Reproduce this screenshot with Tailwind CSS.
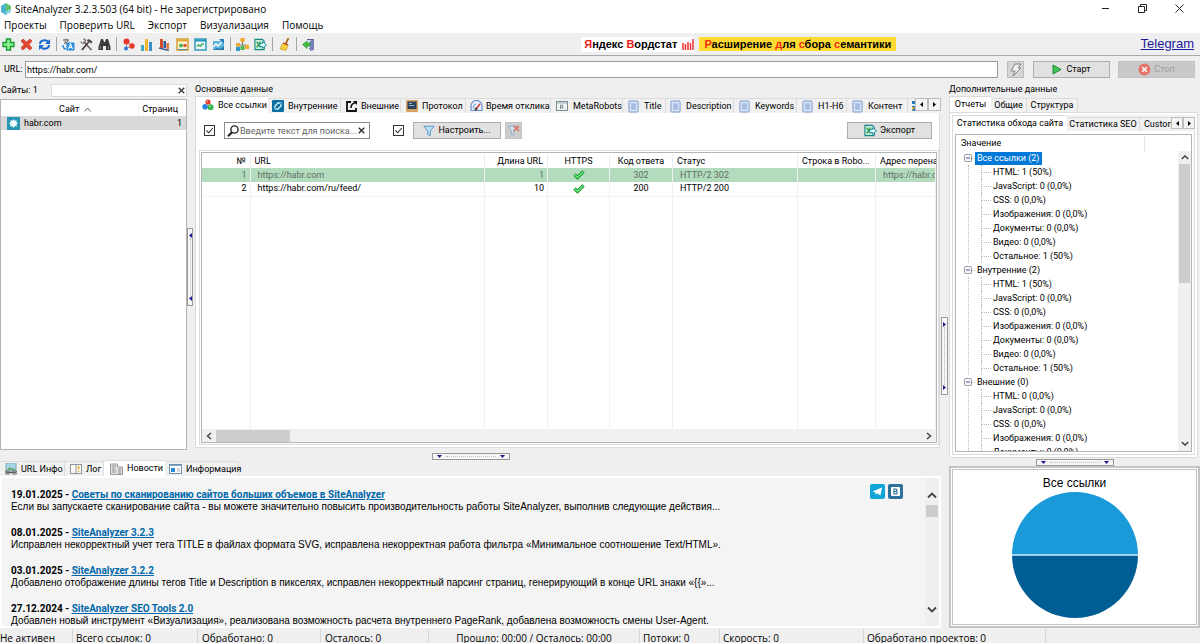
<!DOCTYPE html>
<html lang="ru">
<head>
<meta charset="utf-8">
<title>SiteAnalyzer 3.2.3.503 (64 bit) - Не зарегистрировано</title>
<script src="https://cdn.jsdelivr.net/npm/@tailwindcss/browser@4"></script>
</head>
<body class="flex h-screen flex-col overflow-hidden bg-[#efefef] font-['Roboto',sans-serif] text-[9px] leading-[13px] text-black [&_svg]:shrink-0">

<svg class="hidden" aria-hidden="true">
  <symbol id="doc" viewBox="0 0 12 14"><rect x="1" y="1" width="10" height="12" rx="1" fill="#dfe9f8" stroke="#6f8fc4"/><rect x="3" y="3" width="6" height="8" fill="#b4c8ea"/><path d="M4 5h4M4 7h4M4 9h4" stroke="#8eabd9" stroke-width=".7"/></symbol>
  <symbol id="export" viewBox="0 0 14 14"><path d="M1 1.500h8l2 2v9H1z" fill="#c9f0e4" stroke="#16877f" stroke-width="1.200"/><path d="M3 4l4 6M7 4l-4 6" stroke="#3c9a3c" stroke-width="1.500"/><path d="M6 6h3V4l4.500 3.500L9 11V9H6z" fill="#e9fbff" stroke="#138c9d"/></symbol>
  <symbol id="check" viewBox="0 0 12 10"><path d="M1.500 4.500 4.500 7.500 10.500 1.500" fill="none" stroke="#138a2b" stroke-width="3.200"/><path d="M1.700 4.700 4.500 7.400 10.200 1.800" fill="none" stroke="#5fe873" stroke-width="1.700"/></symbol>
  <symbol id="tick" viewBox="0 0 11 11"><path d="M2.500 5.500l2.200 2.300L8.800 3" fill="none" stroke="#333" stroke-width="1.100"/></symbol>
  <symbol id="funnel" viewBox="0 0 14 14"><path d="M1 1.500h12L8.500 7v5.500l-3-1.500V7z" fill="#bfe3fa" stroke="#4b8dbd"/></symbol>
  <symbol id="up" viewBox="0 0 10 6"><path d="M1 5l4-4 4 4" fill="none" stroke="#444" stroke-width="1.800"/></symbol>
  <symbol id="down" viewBox="0 0 10 6"><path d="M1 1l4 4 4-4" fill="none" stroke="#444" stroke-width="1.800"/></symbol>
  <symbol id="minus" viewBox="0 0 8 8"><rect x=".5" y=".5" width="7" height="7" rx="1" fill="#f8f8f8" stroke="#999"/><path d="M2 4h4" stroke="#3c5a9a"/></symbol>
  <symbol id="balls" viewBox="0 0 14 14"><circle cx="7" cy="3.500" r="3" fill="#e33527"/><circle cx="3.600" cy="9" r="3.300" fill="#2786d8"/><circle cx="10" cy="9.500" r="3.400" fill="#35b447"/><circle cx="6.200" cy="2.700" r="1" fill="#ff9e90"/><circle cx="9.200" cy="8.500" r="1" fill="#a5efac"/></symbol>
  <symbol id="chartwin" viewBox="0 0 13 13"><rect x="1" y="1" width="11" height="11" fill="#e9f7fb" stroke="#2796ba" stroke-width="1.400"/><path d="M1 2.500h11" stroke="#2796ba" stroke-width="2"/><path d="M3 8.500c2-4 3 2 4-1s2-1 3-1" fill="none" stroke="#3caa55" stroke-width="1.400"/></symbol>
</svg>

<header class="shrink-0 bg-white">
  <div class="flex h-[17px] items-center">
    <svg class="h-3 w-3" viewBox="0 0 12 12"><path d="M6 0 1 3v6l5 3z" fill="#48b4cf"/><path d="M6 0l5 3v3L6 9z" fill="#62c46b"/><path d="M6 12l5-3V6L6 9z" fill="#8bd2e6"/></svg>
    <h1 class="ml-[3px] flex-1 font-['Open_Sans','Noto_Sans',sans-serif] text-[10px] leading-[16px]">SiteAnalyzer 3.2.3.503 (64 bit) - Не зарегистрировано</h1>
    <div class="flex items-center gap-[28px] pr-[16px]">
      <button type="button" aria-label="Свернуть" class="flex h-3 w-[9px] items-center"><svg class="w-full" viewBox="0 0 9 9"><path d="M1 4.500h7" stroke="#222"/></svg></button>
      <button type="button" aria-label="Развернуть" class="flex h-3 w-[9px] items-center"><svg class="w-full" viewBox="0 0 9 9"><path d="M.5 2.500h6v6h-6zM2.500 2V.5h6v6H7" fill="none" stroke="#222"/></svg></button>
      <button type="button" aria-label="Закрыть" class="flex h-3 w-[9px] items-center"><svg class="w-full" viewBox="0 0 9 9"><path d="M.5.5l8 8M8.500.5l-8 8" stroke="#222"/></svg></button>
    </div>
  </div>
  <nav class="flex h-[16px] items-center gap-[13px] pl-1 font-['Open_Sans','Noto_Sans',sans-serif] text-[10px] leading-[16px]">
    <button type="button">Проекты</button><button type="button">Проверить URL</button><button type="button">Экспорт</button><button type="button">Визуализация</button><button type="button">Помощь</button>
  </nav>
</header>

<div class="flex h-[23px] shrink-0 items-center border-b border-[#a9a9a9] pl-[2px] pr-[6px]">
  <div class="flex items-center gap-[5px]">
    <button type="button" aria-label="Добавить"><svg class="h-[13px] w-[13px]" viewBox="0 0 13 13"><path d="M4.500 1h4v3.500H12v4H8.500V12h-4V8.500H1v-4h3.500z" fill="#8df28f" stroke="#179c35" stroke-width="1.400"/></svg></button>
    <button type="button" aria-label="Удалить"><svg class="h-[13px] w-[13px]" viewBox="0 0 13 13"><path d="M1 3l2-2 3.500 3L10 1l2 2-3 3.500L12 10l-2 2-3.500-3L3 12l-2-2 3-3.500z" fill="#e5472f" stroke="#bb2d1b" stroke-width=".6"/></svg></button>
    <button type="button" aria-label="Обновить"><svg class="h-[13px] w-[13px]" viewBox="0 0 13 13"><path d="M2 6c0-4 6-5 8-2M11 7c0 4-6 5-8 2" fill="none" stroke="#1769cf" stroke-width="2"/><path d="M12 1v5H7zM1 12V7h5z" fill="#1769cf"/></svg></button>
    <span class="h-[14px] w-px bg-[#a5a5a5]"></span>
    <button type="button" aria-label="Язык"><svg class="h-[13px] w-[13px]" viewBox="0 0 13 13"><path d="M1 2h6M4 .5V2M2 5.500C5 5 6 3 6 2M2.500 3.500l3 2" fill="none" stroke="#555"/><rect x="4.500" y="4.500" width="8" height="8" rx="1" fill="#2b8de0"/><path d="M6.500 11l2-5 2 5M7 9.500h3" fill="none" stroke="#fff" stroke-width="1.100"/><path d="M1 7c0 3 1 4 3 4" fill="none" stroke="#2b8de0" stroke-width="1.500"/></svg></button>
    <button type="button" aria-label="Настройки"><svg class="h-[13px] w-[13px]" viewBox="0 0 13 13"><path d="M3.500 3.500l8 8.500" stroke="#6a6a6a" stroke-width="1.800"/><path d="M1 3.500a2.200 2.200 0 1 0 2.500-2.500" fill="none" stroke="#777" stroke-width="1.400"/><path d="M9 3.500L2 12" stroke="#4d3b36" stroke-width="1.800"/><path d="M6.500 2.500C9 0 11 2 12.500 4.500L11 5.500 9 3.500z" fill="#444"/></svg></button>
    <button type="button" aria-label="Поиск"><svg class="h-[13px] w-[13px]" viewBox="0 0 13 13"><path d="M3 1h2l1 3h1l1-3h2l2.500 8v3H8V8H5v4H.5V9z" fill="#3a3a3a"/><path d="M2.500 8v3M10.500 8v3" stroke="#8a8a8a"/></svg></button>
    <span class="h-[14px] w-px bg-[#a5a5a5]"></span>
    <button type="button" aria-label="Граф"><svg class="h-[13px] w-[13px]" viewBox="0 0 13 13"><path d="M4.500 4v6L10 8z" fill="none" stroke="#888"/><circle cx="4.500" cy="3.500" r="3" fill="#e8392b"/><circle cx="4" cy="10.500" r="2" fill="#2b7ddd"/><circle cx="10" cy="8" r="2.700" fill="#e8392b"/></svg></button>
    <button type="button" aria-label="Диаграмма"><svg class="h-[13px] w-[13px]" viewBox="0 0 13 13"><path d="M1 7h3v6H1z" fill="#3fa7c4"/><path d="M5 1h3v12H5z" fill="#f1b62e"/><path d="M9 4h3v9H9z" fill="#3f8ec4"/></svg></button>
    <button type="button" aria-label="Отчет"><svg class="h-[13px] w-[13px]" viewBox="0 0 13 13"><path d="M2 1h3v9H2z" fill="#d6502e"/><path d="M5.500 3h2.500v7H5.500z" fill="#2d5c9b"/><path d="M8.500 5H11v6H8.500z" fill="#e27b33"/><path d="M1 10l10 2.500" stroke="#3b5f97" stroke-width="1.500"/></svg></button>
    <button type="button" aria-label="Индексация"><svg class="h-[13px] w-[13px]" viewBox="0 0 13 13"><rect x="1" y="1" width="11" height="11" fill="#fff6d9" stroke="#d39a28" stroke-width="1.400"/><path d="M1 2.500h11" stroke="#e1a732" stroke-width="2"/><circle cx="5" cy="7.500" r="2" fill="#4bb257"/><circle cx="9" cy="7.500" r="1.800" fill="#e3512d"/><path d="M2 11.500h9" stroke="#3c92b8"/></svg></button>
    <button type="button" aria-label="Мониторинг"><svg class="h-[13px] w-[13px]"><use href="#chartwin"/></svg></button>
    <button type="button" aria-label="Рост"><svg class="h-[13px] w-[13px]" viewBox="0 0 13 13"><path d="M1 3h11v9H1z" fill="#60b7dd"/><path d="M1 9l3-3 2 2 4-4" fill="none" stroke="#fff" stroke-width="1.400"/><path d="M7 1h5v5z" fill="#2a7fc0"/><path d="M1 12l4-2 3 1 4-3v4z" fill="#2777aa"/></svg></button>
    <span class="h-[14px] w-px bg-[#a5a5a5]"></span>
    <button type="button" aria-label="Структура"><svg class="h-[13px] w-[13px]" viewBox="0 0 13 13"><path d="M6.500 4v3M2.500 9V7h8v2" fill="none" stroke="#777"/><rect x="4.500" y="0" width="4" height="4" fill="#f0a92b"/><rect x="0" y="5" width="4" height="3.500" fill="#e6a937"/><rect x="0" y="9" width="4" height="4" fill="#2e93d0"/><rect x="4.500" y="8" width="4" height="4" fill="#4cb54c"/><rect x="9" y="7" width="4" height="4" fill="#f0a92b"/></svg></button>
    <button type="button" aria-label="Экспорт в Excel"><svg class="h-[13px] w-[13px]"><use href="#export"/></svg></button>
    <span class="h-[14px] w-px bg-[#a5a5a5]"></span>
    <button type="button" aria-label="Очистить"><svg class="h-[13px] w-[13px]" viewBox="0 0 13 13"><path d="M10.500 0L7.500 6" stroke="#a36b25" stroke-width="1.800"/><path d="M5 5l5 2-2 5.500L2 11z" fill="#f6cf3d" stroke="#d39d18" stroke-width=".7"/><path d="M5 5l5 2" stroke="#b03a2b" stroke-width="1.300"/></svg></button>
    <span class="h-[14px] w-px bg-[#a5a5a5]"></span>
    <button type="button" aria-label="Выход"><svg class="h-[13px] w-[13px]" viewBox="0 0 13 13"><path d="M5 1.500h6v9H7" fill="#d5dbf0" stroke="#555b90" stroke-width="1.200"/><path d="M8 3l4-2v11l-4 1z" fill="#7480b6"/><path d="M8 5v3H5v2.500L.5 6.500 5 3v2z" fill="#42c043" stroke="#1e8a2c" stroke-width=".6"/></svg></button>
  </div>
  <div class="ml-auto mr-auto flex items-center gap-[5px] pl-[22px] font-['Liberation_Sans',sans-serif] text-[11px] font-bold leading-[14px]">
    <a href="#wordstat" class="flex h-[15px] items-center gap-[5px] bg-white pl-[3px]"><span><span class="text-[#ee2020]">Я</span>ндекс <span class="text-[#ee2020]">В</span>ордстат</span>
      <svg class="h-[11px] w-[12px]" viewBox="0 0 12 11"><path d="M1 11V4M3.500 11V5M6 11V3M8.500 11V4M11 11V0" stroke="#e33" stroke-width="1.500"/></svg></a>
    <a href="#semantics" class="flex h-[14px] items-center bg-[#ffda33] px-[5px]"><span><span class="text-[#f02a10]">Р</span>асширение <span class="text-[#f02a10]">д</span>ля <span class="text-[#f02a10]">с</span>бора <span class="text-[#f02a10]">с</span>емантики</span></a>
  </div>
  <a href="#telegram" class="font-['Liberation_Sans',sans-serif] text-[13px] leading-[16px] text-[#1b1b9c] underline">Telegram</a>
</div>

<form class="flex h-[27px] shrink-0 items-center pl-1 pr-[5px]">
  <label for="url" class="w-[21px]">URL:</label>
  <input id="url" type="text" value="https://habr.com/" class="h-[17px] min-w-0 flex-1 border border-[#9a9a9a] bg-white px-px outline-none">
  <button type="button" aria-label="Быстрый запуск" class="ml-[9px] flex h-[17px] w-[17px] items-center justify-center border border-[#bcbcbc] bg-[#d6d6d6]"><svg class="h-[14px] w-[12px]" viewBox="0 0 12 14"><path d="M5 1h6L8 5h3l-8 8 2-5H1z" fill="#efefef" stroke="#858585"/></svg></button>
  <button type="button" class="ml-[9px] flex h-[17px] w-[77px] items-center justify-center gap-1 border border-[#adadad] bg-[#e1e1e1]"><svg class="h-[11px] w-[10px]" viewBox="0 0 10 11"><path d="M1 1l8 4.500L1 10z" fill="#43c455" stroke="#168a30"/></svg>Старт</button>
  <button type="button" disabled class="ml-2 flex h-[17px] w-[77px] items-center justify-center gap-[3px] border border-[#c4c4c4] bg-[#c9c9c9] text-[#a2a2a2]"><svg class="h-[13px] w-[13px]" viewBox="0 0 13 13"><circle cx="6.500" cy="6.500" r="6" fill="#e5746a"/><path d="M4.200 4.200l4.600 4.600M8.800 4.200L4.200 8.800" stroke="#fff" stroke-width="1.600"/></svg>Стоп</button>
</form>

<main class="flex min-h-0 flex-1">
  <div class="flex min-w-0 flex-1 flex-col">
    <div class="flex min-h-0 flex-1">

      <section class="flex w-[187px] shrink-0 flex-col">
        <div class="flex h-[15px] items-center pl-px">
          <label for="site-filter" class="w-[50px] shrink-0 whitespace-nowrap">Сайты: 1</label>
          <div class="flex h-[13px] min-w-0 flex-1 items-center border border-[#dcdcdc] bg-white pr-px">
            <input id="site-filter" type="text" class="h-full min-w-0 flex-1 outline-none">
            <button type="button" aria-label="Очистить фильтр"><svg class="h-[7px] w-[7px]" viewBox="0 0 7 7"><path d="M.7.7l5.600 5.600M6.300.7L.7 6.300" stroke="#333" stroke-width="1.300"/></svg></button>
          </div>
        </div>
        <div class="mt-px flex-1 border border-[#b5b5b5] bg-white pt-[2px]">
          <table class="w-full table-fixed">
            <thead><tr class="h-[14px]">
              <th class="border-r border-[#f0f0f0] p-0 font-normal"><span class="inline-flex items-center gap-[5px] pl-3">Сайт <svg class="h-[5px] w-[7px]" viewBox="0 0 7 5"><path d="M.5 4.500l3-3.500 3 3.500" fill="none" stroke="#666"/></svg></span></th>
              <th class="w-[48px] p-0 pr-2 text-right font-normal">Страниц</th></tr></thead>
            <tbody><tr class="h-[14px] bg-[#d9d9d9]">
              <td class="p-0"><span class="flex items-center gap-[4px] pl-[6px]"><svg class="h-[13px] w-[13px]" viewBox="0 0 13 13"><rect width="13" height="13" fill="#2796b4"/><path d="M6.500 2l1 1.700 2-.7-.2 2L11 6l-1.500 1L10 9.500 8 9l-1.500 2L5 9l-2 .5.500-2L2 6l1.700-1L3.500 3l2 .7z" fill="#eefcff"/></svg>habr.com</span></td>
              <td class="p-0 pr-1 text-right">1</td></tr></tbody>
          </table>
        </div>
      </section>

      <div class="flex w-[8px] shrink-0 items-center"><div class="flex h-[78px] w-[6px] flex-col items-center justify-between border border-[#999] bg-[#f6f6f6] py-1"><svg class="h-[5px] w-[3px]" viewBox="0 0 3 5"><path d="M3 0v5L0 2.500z" fill="#1c1c8e"/></svg><span class="w-px flex-1 border-l border-dotted border-[#bbb]"></span><svg class="h-[5px] w-[3px]" viewBox="0 0 3 5"><path d="M3 0v5L0 2.500z" fill="#1c1c8e"/></svg></div></div>

      <section class="flex min-w-0 flex-1 flex-col pb-[2px]">
        <h2 class="h-[13px] shrink-0">Основные данные</h2>
        <div role="tablist" class="flex h-[17px] shrink-0 items-end overflow-hidden whitespace-nowrap">
          <button type="button" role="tab" aria-selected="true" class="flex h-[17px] w-[73px] shrink-0 items-center gap-1 border-l border-t border-[#dcdcdc] bg-white pl-[6px]"><svg class="h-[12px] w-[12px]"><use href="#balls"/></svg>Все ссылки</button>
          <div class="flex h-[15px] min-w-0 flex-1 items-center overflow-hidden border-t border-[#dcdcdc] bg-[#f1f1f1]">
            <button type="button" role="tab" class="flex h-full w-[73px] shrink-0 items-center gap-1 border-r border-[#dcdcdc] pl-1"><svg class="h-[12px] w-[12px]" viewBox="0 0 12 12"><rect width="12" height="12" rx="1" fill="#0d6d9f"/><path d="M3 9V6l3-3h3v3L6 9z" fill="none" stroke="#c3f1ff" stroke-width="1.400"/><path d="M2.500 9.500l7-7" stroke="#0d6d9f"/></svg>Внутренние</button>
            <button type="button" role="tab" class="flex h-full w-[60px] shrink-0 items-center gap-1 border-r border-[#dcdcdc] pl-[5px]"><svg class="h-[11px] w-[11px]" viewBox="0 0 11 11"><path d="M5 1H1v9h9V7" fill="none" stroke="#111" stroke-width="1.800"/><path d="M7 0h4v4z" fill="#111"/><path d="M10 1.500C6 2 5 4 5 7" fill="none" stroke="#111" stroke-width="1.600"/></svg>Внешние</button>
            <button type="button" role="tab" class="flex h-full w-[65px] shrink-0 items-center gap-1 border-r border-[#dcdcdc] pl-[5px]"><svg class="h-[12px] w-[12px]" viewBox="0 0 12 12"><rect width="12" height="12" rx="1" fill="#d9a463"/><rect x="1.500" y="1.500" width="9" height="7.500" fill="#2b4157"/><path d="M3 3.500h3M3 5.500h5" stroke="#8fb4d6"/></svg>Протокол</button>
            <button type="button" role="tab" class="flex h-full w-[85px] shrink-0 items-center gap-[3px] border-r border-[#dcdcdc] pl-[4px]"><svg class="h-[12px] w-[13px]" viewBox="0 0 13 12"><path d="M1 10.500V6a5.500 5.500 0 0 1 11 0v4.500z" fill="#e7eefb" stroke="#6a8dcb" stroke-width="1.200"/><path d="M6 9l4-5" stroke="#d93b32" stroke-width="1.500"/><path d="M3 8l1-3 2-1" fill="none" stroke="#5b9dcf"/><circle cx="6" cy="9" r="1.500" fill="#444"/></svg>Время отклика</button>
            <button type="button" role="tab" class="flex h-full w-[72px] shrink-0 items-center gap-[5px] border-r border-[#dcdcdc] pl-[5px]"><svg class="h-[10px] w-[12px]" viewBox="0 0 12 10"><rect x=".5" y=".5" width="11" height="9" fill="#edf5f5" stroke="#7c8b8f"/><path d="M1 2h10" stroke="#9fb0b4"/><path d="M4.500 8V4h2q1.200 1-.2 2h-1.800M6 6l1.500 2" fill="none" stroke="#71878e" stroke-width=".9"/></svg>MetaRobots</button>
            <button type="button" role="tab" class="flex h-full w-[43px] shrink-0 items-center gap-[5px] border-r border-[#dcdcdc] pl-[5px]"><svg class="h-[13px] w-[11px]"><use href="#doc"/></svg>Title</button>
            <button type="button" role="tab" class="flex h-full w-[68px] shrink-0 items-center gap-[5px] border-r border-[#dcdcdc] pl-1"><svg class="h-[13px] w-[11px]"><use href="#doc"/></svg>Description</button>
            <button type="button" role="tab" class="flex h-full w-[63px] shrink-0 items-center gap-[5px] border-r border-[#dcdcdc] pl-[5px]"><svg class="h-[13px] w-[11px]"><use href="#doc"/></svg>Keywords</button>
            <button type="button" role="tab" class="flex h-full w-[50px] shrink-0 items-center gap-[5px] border-r border-[#dcdcdc] pl-[5px]"><svg class="h-[13px] w-[11px]"><use href="#doc"/></svg>H1-H6</button>
            <button type="button" role="tab" class="flex h-full w-[61px] shrink-0 items-center gap-[5px] border-r border-[#dcdcdc] pl-[5px]"><svg class="h-[13px] w-[11px]"><use href="#doc"/></svg>Контент</button>
            <button type="button" role="tab" aria-label="Изображения" class="flex h-full w-[16px] shrink-0 items-center pl-[4px]"><svg class="h-[10px] w-[10px]" viewBox="0 0 10 10"><rect width="10" height="10" fill="#2778bb"/><path d="M0 10V6h3z" fill="#e8b03d"/><rect y="3" width="4" height="2" fill="#d9efff"/></svg></button>
          </div>
          <div class="mb-[2px] flex h-[13px] shrink-0">
            <button type="button" aria-label="Назад" class="flex w-[13px] items-center justify-center border border-[#bdbdbd] bg-[#f4f4f4]"><svg class="h-[5px] w-[3px]" viewBox="0 0 3 5"><path d="M3 0v5L0 2.500z"/></svg></button>
            <button type="button" aria-label="Вперед" class="flex w-[13px] items-center justify-center border border-[#bdbdbd] bg-[#f4f4f4]"><svg class="h-[5px] w-[3px]" viewBox="0 0 3 5"><path d="M0 0v5l3-2.500z"/></svg></button>
          </div>
        </div>

        <div class="mr-px flex min-h-0 flex-1 flex-col border border-t-0 border-[#dcdcdc] bg-white">
          <div class="flex h-[37px] shrink-0 items-center pb-[2px] pl-[8px] pr-[7px]">
            <span class="grid shrink-0"><input type="checkbox" checked aria-label="Поиск включен" class="col-start-1 row-start-1 h-[11px] w-[11px] appearance-none border border-[#333] bg-white"><svg class="pointer-events-none col-start-1 row-start-1 h-[11px] w-[11px]"><use href="#tick"/></svg></span>
            <div class="ml-[9px] flex h-[17px] w-[146px] shrink-0 items-center border border-[#8c8c8c] px-[2px]">
              <svg class="h-[12px] w-[12px]" viewBox="0 0 12 12"><circle cx="7.500" cy="4.500" r="3.600" fill="none" stroke="#222" stroke-width="1.400"/><path d="M5 7.200L1 11.200" stroke="#222" stroke-width="2.200"/></svg>
              <input type="text" aria-label="Поиск" placeholder="Введите текст для поиска..." class="h-full min-w-0 flex-1 pl-px outline-none placeholder:text-[#666]">
              <button type="button" aria-label="Очистить поиск" class="pr-[2px]"><svg class="h-[7px] w-[7px]" viewBox="0 0 7 7"><path d="M.7.7l5.600 5.600M6.300.7L.7 6.300" stroke="#333" stroke-width="1.400"/></svg></button>
            </div>
            <span class="ml-[23px] grid shrink-0"><input type="checkbox" checked aria-label="Фильтр включен" class="col-start-1 row-start-1 h-[11px] w-[11px] appearance-none border border-[#333] bg-white"><svg class="pointer-events-none col-start-1 row-start-1 h-[11px] w-[11px]"><use href="#tick"/></svg></span>
            <button type="button" class="ml-[9px] flex h-[17px] w-[88px] items-center justify-center gap-[3px] border border-[#adadad] bg-[#e1e1e1]"><svg class="h-[12px] w-[12px]"><use href="#funnel"/></svg>Настроить...</button>
            <button type="button" aria-label="Сбросить фильтр" class="ml-1 flex h-[17px] w-[17px] items-center justify-center border border-[#c4c4c4] bg-[#cdcdcd]"><svg class="h-[12px] w-[13px]" viewBox="0 0 15 14"><path d="M1 1.500h10L7.500 7v5.500l-2.500-1.500V7z" fill="#cfe0ea" stroke="#8fadc0"/><path d="M8 1l6 6M14 1L8 7" stroke="#d5776d" stroke-width="2"/></svg></button>
            <button type="button" class="ml-auto flex h-[17px] w-[85px] items-center justify-center gap-[3px] border border-[#adadad] bg-[#e1e1e1]"><svg class="h-[13px] w-[13px]"><use href="#export"/></svg>Экспорт</button>
          </div>

          <div class="mb-[2px] ml-[3px] flex min-h-0 flex-1 flex-col border border-[#dcdcdc] p-px">
          <div class="flex min-h-0 flex-1 flex-col border border-[#b5b5b5] bg-white">
            <div class="flex min-h-0 flex-1 flex-col overflow-hidden pt-px">
              <table class="h-full w-full table-fixed whitespace-nowrap">
                <colgroup><col class="w-[48px]"><col><col class="w-[63px]"><col class="w-[62px]"><col class="w-[63px]"><col class="w-[125px]"><col class="w-[78px]"><col class="w-[60px]"></colgroup>
                <thead><tr class="h-[14px] text-left [&>th]:overflow-hidden [&>th]:border-r [&>th]:border-[#ececec] [&>th]:p-0 [&>th]:px-1 [&>th]:font-normal [&>th]:last:border-r-0">
                  <th class="text-right">№</th><th>URL</th><th class="text-right">Длина URL</th><th class="text-center">HTTPS</th><th class="text-center">Код ответа</th><th>Статус</th><th>Строка в Robo...</th><th>Адрес перенаправления</th></tr></thead>
                <tbody class="[&_td]:overflow-hidden [&_td]:border-r [&_td]:border-[#f1f1f1] [&_td]:p-0 [&_td]:px-[3px]">
                  <tr class="h-[14px] bg-[#b3dcbf] text-[#5f6e63]"><td class="text-right">1</td><td><a href="#habr" class="pl-1">https://habr.com</a></td><td class="text-right">1</td><td><svg class="mx-auto h-[10px] w-[12px]" role="img" aria-label="Да"><use href="#check"/></svg></td><td class="text-center">302</td><td><span class="pl-1">HTTP/2 302</span></td><td></td><td><span class="pl-1">https://habr.com/ru/feed/</span></td></tr>
                  <tr class="h-[14px]"><td class="text-right">2</td><td><a href="#feed" class="pl-1">https://habr.com/ru/feed/</a></td><td class="text-right">10</td><td><svg class="mx-auto h-[10px] w-[12px]" role="img" aria-label="Да"><use href="#check"/></svg></td><td class="text-center">200</td><td><span class="pl-1">HTTP/2 200</span></td><td></td><td></td></tr>
                  <tr class="border-t border-[#f4f4f4]" aria-hidden="true"><td></td><td></td><td></td><td></td><td></td><td></td><td></td><td></td></tr>
                </tbody>
              </table>
            </div>
            <div class="flex h-[13px] shrink-0 items-center bg-[#f0f0f0] px-1">
              <svg class="h-[8px] w-[6px]" viewBox="0 0 6 8"><path d="M5 1L1.500 4 5 7" fill="none" stroke="#444" stroke-width="1.500"/></svg>
              <span class="ml-1 h-[12px] w-[74px] bg-[#cdcdcd]"></span>
              <svg class="ml-auto h-[8px] w-[6px]" viewBox="0 0 6 8"><path d="M1 1l3.500 3L1 7" fill="none" stroke="#444" stroke-width="1.500"/></svg>
            </div>
          </div>
          </div>
        </div>
      </section>
    </div>

    <div class="flex h-[10px] shrink-0 items-end justify-center"><div class="flex h-[7px] w-[78px] items-center justify-between border border-[#999] bg-[#f6f6f6] px-1"><svg class="h-[3px] w-[5px]" viewBox="0 0 5 3"><path d="M0 0h5L2.500 3z" fill="#1c1c8e"/></svg><span class="mx-1 flex-1 border-t border-dotted border-[#bbb]"></span><svg class="h-[3px] w-[5px]" viewBox="0 0 5 3"><path d="M0 0h5L2.500 3z" fill="#1c1c8e"/></svg></div></div>

    <section class="flex h-[168px] shrink-0 flex-col">
      <div role="tablist" class="flex h-[16px] shrink-0 items-end whitespace-nowrap">
        <button type="button" role="tab" class="flex h-[15px] w-[65px] items-center gap-1 border-r border-t border-[#dcdcdc] bg-[#f1f1f1] pl-[5px]"><svg class="h-[12px] w-[12px]" viewBox="0 0 12 12"><rect x="1" y="0" width="10" height="8" fill="#a7d5ea" stroke="#8aa"/><path d="M2 7l3-3 2 2 1-1 3 2z" fill="#62a568"/><path d="M1 9.500h3M8 9.500h3M4 9.500h4" stroke="#666" stroke-width="1.200"/><rect x="0" y="8" width="5" height="3" rx="1.500" fill="none" stroke="#555"/><rect x="7" y="8" width="5" height="3" rx="1.500" fill="none" stroke="#555"/></svg>URL Инфо</button>
        <button type="button" role="tab" class="flex h-[15px] w-[39px] items-center gap-1 border-r border-t border-[#dcdcdc] bg-[#f1f1f1] pl-[5px]"><svg class="h-[10px] w-[12px]" viewBox="0 0 12 10"><rect x=".5" y=".5" width="11" height="9" fill="#fbfbf4" stroke="#8d949e"/><path d="M6 0v10" stroke="#8d949e"/><path d="M8.500 2v3.500M8.500 7v1" stroke="#e79b1d" stroke-width="1.500"/></svg>Лог</button>
        <button type="button" role="tab" aria-selected="true" class="flex h-[16px] w-[61px] items-center gap-1 border-t border-[#dcdcdc] bg-white pl-[6px]"><svg class="h-[12px] w-[13px]" viewBox="0 0 13 12"><path d="M.5 1h7v3h5v7.500H.5z" fill="#e2e2e2" stroke="#999"/><path d="M2 3h4M2 5h3M2 7h4M2 9h4M8 6h3M8 8h3M8 10h3" stroke="#888" stroke-width=".9"/></svg>Новости</button>
        <button type="button" role="tab" class="flex h-[15px] w-[74px] items-center gap-1 border-r border-t border-[#dcdcdc] bg-[#f1f1f1] pl-[4px]"><svg class="h-[10px] w-[13px]" viewBox="0 0 13 10"><rect x=".5" y=".5" width="12" height="9" fill="#fff" stroke="#6e8eaa"/><path d="M1 1.500h11" stroke="#7fa9cf"/><rect x="2" y="4" width="4" height="4" fill="#268bd2"/><path d="M8 5h3M8 7h3" stroke="#aaa"/></svg>Информация</button>
      </div>
      <div class="flex min-h-0 flex-1 border-2 border-white bg-[#f4f4f4] font-['Liberation_Sans',sans-serif] text-[10px] leading-[12px]">
        <div class="min-w-0 flex-1 space-y-[14px] overflow-hidden pl-[9px] pt-[11px] whitespace-nowrap">
          <article><h3 class="font-['Roboto',sans-serif] font-bold">19.01.2025 - <a href="#n1" class="text-[#0068aa] underline">Советы по сканированию сайтов больших объемов в SiteAnalyzer</a></h3><p>Если вы запускаете сканирование сайта - вы можете значительно повысить производительность работы SiteAnalyzer, выполнив следующие действия...</p></article>
          <article><h3 class="font-['Roboto',sans-serif] font-bold">08.01.2025 - <a href="#n2" class="text-[#0068aa] underline">SiteAnalyzer 3.2.3</a></h3><p>Исправлен некорректный учет тега TITLE в файлах формата SVG, исправлена некорректная работа фильтра «Минимальное соотношение Text/HTML».</p></article>
          <article><h3 class="font-['Roboto',sans-serif] font-bold">03.01.2025 - <a href="#n3" class="text-[#0068aa] underline">SiteAnalyzer 3.2.2</a></h3><p>Добавлено отображение длины тегов Title и Description в пикселях, исправлен некорректный парсинг страниц, генерирующий в конце URL знаки «{{»...</p></article>
          <article><h3 class="font-['Roboto',sans-serif] font-bold">27.12.2024 - <a href="#n4" class="text-[#0068aa] underline">SiteAnalyzer SEO Tools 2.0</a></h3><p>Добавлен новый инструмент «Визуализация», реализована возможность расчета внутреннего PageRank, добавлена возможность смены User-Agent.</p></article>
        </div>
        <div class="flex shrink-0 gap-[3px] pr-[22px] pt-[6px]">
          <a href="#tg" aria-label="Telegram"><svg class="h-[15px] w-[15px]" viewBox="0 0 15 15"><rect width="15" height="15" rx="2" fill="#14a5d8"/><path d="M2.500 7.500L12 3.500l-1.500 8L7 9.300 5.500 11V8.500z" fill="#fff"/></svg></a>
          <a href="#vk" aria-label="ВКонтакте"><svg class="h-[15px] w-[15px]" viewBox="0 0 15 15"><rect width="15" height="15" rx="2" fill="#2c709c"/><rect x="3" y="3" width="9" height="9" rx="1" fill="#fff"/><path d="M6 5h2q1.500 1 0 2.500H6zM6 7.500h2.500q1.500 1.200 0 2.500H6z" fill="none" stroke="#2c709c" stroke-width="1.200"/></svg></a>
        </div>
        <div class="flex w-[14px] shrink-0 flex-col items-center bg-[#efefef] pb-[13px] pt-[14px]">
          <svg class="h-[7px] w-[10px]"><use href="#up"/></svg><span class="mt-[6px] h-[12px] w-[12px] bg-[#cdcdcd]"></span><svg class="mt-auto h-[7px] w-[10px]"><use href="#down"/></svg>
        </div>
      </div>
    </section>
  </div>

  <div class="flex w-[8px] shrink-0 items-center"><div class="flex h-[78px] w-[7px] flex-col items-center justify-between border border-[#999] bg-[#f6f6f6] py-1"><svg class="h-[5px] w-[3px]" viewBox="0 0 3 5"><path d="M0 0v5l3-2.500z" fill="#1c1c8e"/></svg><span class="w-px flex-1 border-l border-dotted border-[#bbb]"></span><svg class="h-[5px] w-[3px]" viewBox="0 0 3 5"><path d="M0 0v5l3-2.500z" fill="#1c1c8e"/></svg></div></div>

  <aside class="flex w-[251px] shrink-0 flex-col">
    <h2 class="h-[13px] shrink-0">Дополнительные данные</h2>
    <div role="tablist" class="flex h-[16px] shrink-0 items-end whitespace-nowrap">
      <button type="button" role="tab" aria-selected="true" class="h-[16px] w-[42px] border-l border-t border-[#dcdcdc] bg-white">Отчеты</button>
      <button type="button" role="tab" class="h-[14px] w-[36px] border-r border-t border-[#dcdcdc] bg-[#f1f1f1]">Общие</button>
      <button type="button" role="tab" class="h-[14px] w-[51px] border-r border-t border-[#dcdcdc] bg-[#f1f1f1]">Структура</button>
    </div>
    <div class="mr-[2px] flex min-h-0 flex-1 flex-col border border-[#dcdcdc] bg-white p-[2px]">
      <div role="tablist" class="flex h-[16px] shrink-0 items-end overflow-hidden whitespace-nowrap bg-[#f1f1f1]">
        <button type="button" role="tab" aria-selected="true" class="h-[16px] w-[115px] shrink-0 border-l border-t border-[#dcdcdc] bg-white">Статистика обхода сайта</button>
        <button type="button" role="tab" class="h-[14px] w-[73px] shrink-0 border-r border-t border-[#dcdcdc]">Статистика SEO</button>
        <button type="button" role="tab" class="h-[14px] min-w-0 flex-1 overflow-hidden border-t border-[#dcdcdc] pl-1 text-left">Custom Search</button>
        <div class="mb-[2px] flex h-[12px] shrink-0">
          <button type="button" aria-label="Назад" class="flex w-[12px] items-center justify-center border border-[#bdbdbd] bg-[#f4f4f4]"><svg class="h-[5px] w-[3px]" viewBox="0 0 3 5"><path d="M3 0v5L0 2.500z"/></svg></button>
          <button type="button" aria-label="Вперед" class="flex w-[12px] items-center justify-center border border-[#bdbdbd] bg-[#f4f4f4]"><svg class="h-[5px] w-[3px]" viewBox="0 0 3 5"><path d="M0 0v5l3-2.500z"/></svg></button>
        </div>
      </div>
      <div class="flex min-h-0 flex-1 flex-col border border-t-0 border-[#dcdcdc] px-[2px] pb-[2px] pt-[3px]">
        <div class="flex min-h-0 flex-1 flex-col border border-[#b5b5b5] bg-white">
          <div class="flex h-[16px] shrink-0 items-center pl-[5px]"><span class="flex-1">Значение</span><span class="mr-[46px] h-full w-px bg-[#e6e6e6]"></span></div>
          <div class="flex min-h-0 flex-1">
            <div class="min-w-0 flex-1 overflow-hidden whitespace-nowrap pl-2">
              <ul>
                <li><div class="flex h-[14px] items-center"><svg class="h-[8px] w-[8px]"><use href="#minus"/></svg><span class="w-[3px] border-t border-dotted border-[#bbb]"></span><span class="bg-[#0078d7] px-[2px] text-white">Все ссылки (2)</span></div>
                  <ul class="ml-1 border-l border-dotted border-[#bbb] pl-[12px] [&>li]:flex [&>li]:h-[14px] [&>li]:items-center [&>li]:gap-[2px] [&>li]:border-l [&>li]:border-dotted [&>li]:border-[#bbb] [&>li]:before:w-[9px] [&>li]:before:border-t [&>li]:before:border-dotted [&>li]:before:border-[#bbb] [&>li]:before:content-['']"><li>HTML: 1 (50%)</li><li>JavaScript: 0 (0,0%)</li><li>CSS: 0 (0,0%)</li><li>Изображения: 0 (0,0%)</li><li>Документы: 0 (0,0%)</li><li>Видео: 0 (0,0%)</li><li>Остальное: 1 (50%)</li></ul></li>
                <li><div class="flex h-[14px] items-center"><svg class="h-[8px] w-[8px]"><use href="#minus"/></svg><span class="w-[3px] border-t border-dotted border-[#bbb]"></span><span class="px-[2px]">Внутренние (2)</span></div>
                  <ul class="ml-1 border-l border-dotted border-[#bbb] pl-[12px] [&>li]:flex [&>li]:h-[14px] [&>li]:items-center [&>li]:gap-[2px] [&>li]:border-l [&>li]:border-dotted [&>li]:border-[#bbb] [&>li]:before:w-[9px] [&>li]:before:border-t [&>li]:before:border-dotted [&>li]:before:border-[#bbb] [&>li]:before:content-['']"><li>HTML: 1 (50%)</li><li>JavaScript: 0 (0,0%)</li><li>CSS: 0 (0,0%)</li><li>Изображения: 0 (0,0%)</li><li>Документы: 0 (0,0%)</li><li>Видео: 0 (0,0%)</li><li>Остальное: 1 (50%)</li></ul></li>
                <li><div class="flex h-[14px] items-center"><svg class="h-[8px] w-[8px]"><use href="#minus"/></svg><span class="w-[3px] border-t border-dotted border-[#bbb]"></span><span class="px-[2px]">Внешние (0)</span></div>
                  <ul class="ml-1 border-l border-dotted border-[#bbb] pl-[12px] [&>li]:flex [&>li]:h-[14px] [&>li]:items-center [&>li]:gap-[2px] [&>li]:border-l [&>li]:border-dotted [&>li]:border-[#bbb] [&>li]:before:w-[9px] [&>li]:before:border-t [&>li]:before:border-dotted [&>li]:before:border-[#bbb] [&>li]:before:content-['']"><li>HTML: 0 (0,0%)</li><li>JavaScript: 0 (0,0%)</li><li>CSS: 0 (0,0%)</li><li>Изображения: 0 (0,0%)</li><li>Документы: 0 (0,0%)</li></ul></li>
              </ul>
            </div>
            <div class="flex w-[13px] shrink-0 flex-col items-center bg-[#f0f0f0] pb-[5px] pt-1"><svg class="h-[5px] w-[8px]"><use href="#up"/></svg><span class="mt-1 h-[119px] w-[11px] bg-[#cdcdcd]"></span><svg class="mt-auto h-[5px] w-[8px]"><use href="#down"/></svg></div>
          </div>
        </div>
      </div>
    </div>
    <div class="flex h-[8px] shrink-0 items-center justify-center"><div class="flex h-[7px] w-[78px] items-center justify-between border border-[#999] bg-[#f6f6f6] px-1"><svg class="h-[3px] w-[5px]" viewBox="0 0 5 3"><path d="M0 0h5L2.500 3z" fill="#1c1c8e"/></svg><span class="mx-1 flex-1 border-t border-dotted border-[#bbb]"></span><svg class="h-[3px] w-[5px]" viewBox="0 0 5 3"><path d="M0 0h5L2.500 3z" fill="#1c1c8e"/></svg></div></div>
    <figure class="shrink-0 border-2 border-[#c4c4c4] bg-white p-px">
      <div class="flex h-[156px] flex-col items-center border border-[#c4c4c4] pt-[5px]">
        <figcaption class="font-['Liberation_Sans',sans-serif] text-[12px] leading-[16px]">Все ссылки</figcaption>
        <svg class="mt-px h-[126px] w-[126px]" viewBox="0 0 126 126" role="img" aria-label="50% / 50%"><path d="M0 63a63 63 0 0 1 126 0z" fill="#1b9ad9"/><path d="M0 63a63 63 0 0 0 126 0z" fill="#005e95"/><path d="M0 63h126" stroke="#d9edf8" stroke-width="1.500"/></svg>
      </div>
    </figure>
  </aside>
</main>

<footer class="mt-px flex h-[14px] shrink-0 overflow-hidden whitespace-nowrap font-['Open_Sans','Noto_Sans',sans-serif] text-[10px] leading-[18px] [&>span]:shrink-0 [&>span]:border-r [&>span]:border-[#d6d6d6]">
  <span class="w-[73px]">Не активен</span><span class="w-[125px] pl-[3px]">Всего ссылок: 0</span><span class="w-[123px] pl-[4px]">Обработано: 0</span><span class="w-[108px] pl-[4px]">Осталось: 0</span><span class="w-[211px] text-center">Прошло: 00:00 / Осталось: 00:00</span><span class="w-[80px] pl-[3px]">Потоки: 0</span><span class="w-[144px] pl-[3px]">Скорость: 0</span><span class="w-[182px] pl-[3px]">Обработано проектов: 0</span>
</footer>
</body>
</html>
